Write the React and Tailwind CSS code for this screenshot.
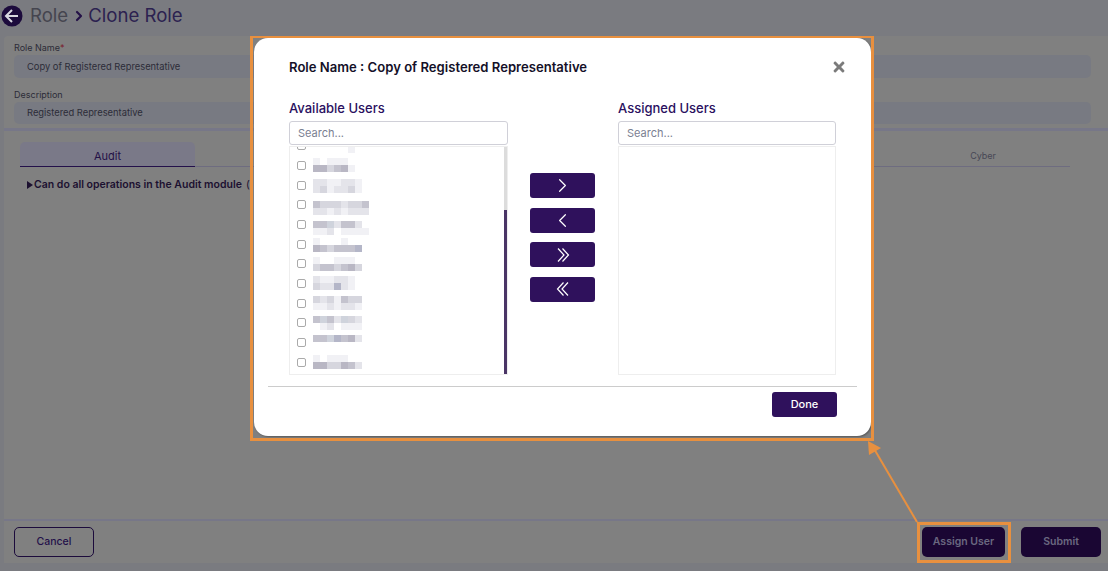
import React from "react";
import { ChevronRight, ChevronLeft } from "lucide-react";
import { FaTimes } from "react-icons/fa";

const A = "#c4c3ce", B = "#b9b7c4", C = "#d6d6de", D = "#e4e4ea", E = "#f1f1f5", W = "#ffffff", G = "#cfd3dc", H = "#b4b6c8";

const rows = [
  { y: 0, t: [A, C, D, G, C, A, C, G], b: [W, W, W, W, W, E, W, W] },
  { y: 0, t: [E, W, E, E, E, W, W, W], b: [B, B, C, A, B, E, W, W] },
  { y: 1, t: [D, D, E, E, D, D, E, W], b: [D, C, E, D, D, C, E, W] },
  { y: 3, t: [A, C, C, C, D, C, C, A], b: [D, D, E, D, E, D, D, D] },
  { y: 4, t: [A, A, G, D, A, A, D, W], b: [E, E, D, W, E, E, E, E] },
  { y: 1, t: [E, W, W, W, E, W, W, W], b: [B, A, C, A, A, A, H, W] },
  { y: 0, t: [E, W, W, E, E, E, W, W], b: [C, A, A, C, A, B, C, W] },
  { y: 0, t: [D, E, E, D, D, E, W, W], b: [C, D, D, H, D, E, W, W] },
  { y: 0, t: [C, D, C, E, A, C, C, W], b: [E, E, D, E, D, D, E, W] },
  { y: 0, t: [A, G, A, D, G, C, D, W], b: [W, E, D, W, E, E, E, W] },
  { y: 0, t: [A, A, G, H, A, B, D, W], b: [W, W, W, W, W, W, W, W] },
  { y: 0, t: [E, W, E, E, E, W, W, W], b: [B, B, C, C, B, A, D, W] },
];

function Cells({ list }) {
  return (
    <div className="flex">
      {list.map((c, i) => (
        <div key={i} className="w-[7px] h-[7px]" style={{ backgroundColor: c }} />
      ))}
    </div>
  );
}

function SearchBox() {
  return (
    <input
      readOnly
      placeholder="Search..."
      className="block w-full h-[24px] mt-[3px] border border-[#d0d0d8] rounded-[3px] px-2 text-[11px] text-[#555] placeholder:text-[#7b8092] outline-none bg-white"
    />
  );
}

function MoveButton({ children }) {
  return (
    <button className="w-[65px] h-[25px] bg-[#2f115c] rounded-[3px] flex items-center justify-center text-white">
      {children}
    </button>
  );
}

function Double({ left }) {
  return (
    <svg width="14" height="14" viewBox="0 0 14 14" fill="none" stroke="currentColor" strokeWidth="1.2">
      {left ? (
        <>
          <polyline points="7.5,0.5 1.5,7 7.5,13.5" />
          <polyline points="12,0.5 6,7 12,13.5" />
        </>
      ) : (
        <>
          <polyline points="2,0.5 8,7 2,13.5" />
          <polyline points="6.5,0.5 12.5,7 6.5,13.5" />
        </>
      )}
    </svg>
  );
}

export default function App() {
  return (
    <div className="relative w-[1108px] h-[571px] overflow-hidden bg-[#7a7b80] font-['Inter',sans-serif]">
      {/* Dimmed page */}
      <div className="h-[36px] flex items-center pl-[1px] pb-[6px]">
        <svg width="22" height="22" viewBox="0 0 22 22" className="mt-[2px]">
          <circle cx="11" cy="11" r="10.5" fill="#1c0b3c" />
          <polyline points="11,5 5,11 11,17" fill="none" stroke="#d8d8e0" strokeWidth="2" />
          <line x1="5.5" y1="11" x2="17" y2="11" stroke="#d8d8e0" strokeWidth="2" />
        </svg>
        <span className="ml-[7px] text-[18.6px] leading-[24px] text-[#45454f]">Role</span>
        <ChevronRight size={16} strokeWidth={3.2} className="text-[#241147] ml-[3px] mr-0 mt-[2px]" />
        <span className="ml-[1px] text-[18.6px] leading-[24px] text-[#2c2250]">Clone Role</span>
      </div>

      <div className="ml-[4px] h-[527px] bg-[#808080] rounded-tl-[4px] flex flex-col">
        <div className="px-[10px] pt-[6px] h-[95px] border-b-[3px] border-[#777788]">
          <div className="text-[9px] leading-[12px] text-[#2c2c38]">
            Role Name<span className="text-[#7a1a2a]">*</span>
          </div>
          <div className="mt-[1px] w-[1077px] h-[23px] bg-[#787a82] rounded-[5px] pl-[13px] pt-[2px] flex items-center text-[9.35px] text-[#2c2c38]">
            Copy of Registered Representative
          </div>
          <div className="mt-[11px] text-[9px] leading-[12px] text-[#2c2c38]">Description</div>
          <div className="mt-[1px] w-[1077px] h-[22px] bg-[#787a82] rounded-[5px] pl-[13px] pt-[1px] flex items-center text-[9.35px] text-[#2c2c38]">
            Registered Representative
          </div>
        </div>

        <div className="flex-1 pl-[16px] pt-[11px]">
          <div className="flex w-[1050px] border-b border-[#6e6c80]">
            <div className="w-[175px] h-[25px] bg-[#7a7988] rounded-t-[5px] border-b border-[#23104a] -mb-px flex items-end justify-center pb-[3px] text-[11px] leading-[14px] text-[#241147]">
              Audit
            </div>
            <div className="flex-1 flex justify-end pr-[74px] items-end pb-[4px] text-[9px] leading-[12px] text-[#474755]">Cyber</div>
          </div>
          <div className="mt-[10px] pl-[7px] flex items-center text-[10.5px] font-semibold text-[#1c1030]">
            <span className="w-0 h-0 border-y-[4px] border-y-transparent border-l-[6px] border-l-[#1c1030] mr-[1px]" />
            Can do all operations in the Audit module
            <span className="ml-[4px] font-normal">(i</span>
          </div>
        </div>

        <div className="h-[44px] border-t-[2px] border-[#777788] pl-[10px] pr-[7px] flex items-center justify-between">
          <button className="w-[80px] h-[30px] border border-[#1c0b3c] rounded-[5px] text-[10.5px] font-medium text-[#23104a]">
            Cancel
          </button>
          <div className="flex gap-[16px]">
            <button className="w-[83px] h-[30px] bg-[#1a0633] rounded-[5px] text-[10.5px] font-semibold text-[#6a6880]">
              Assign User
            </button>
            <button className="w-[80px] h-[30px] bg-[#1a0633] rounded-[5px] text-[10.5px] font-semibold text-[#6a6880]">
              Submit
            </button>
          </div>
        </div>
      </div>

      {/* Modal */}
      <div className="absolute left-[254px] top-[38px] w-[617px] h-[398px] bg-white rounded-[14px] shadow-[1px_1px_2px_rgba(0,0,0,0.3)] pl-[35px] pr-[35px] flex flex-col">
        <div className="pt-[20px] h-[60px] flex items-start justify-between">
          <span className="text-[13.1px] leading-[18px] font-semibold text-[#141028]">
            Role Name : Copy of Registered Representative
          </span>
          <FaTimes className="text-[#7b7b7b] text-[16px] mt-[1px] -mr-[11px]" />
        </div>
        <div className="flex">
          <div className="w-[219px]">
            <div className="text-[13px] leading-[20px] font-medium text-[#2a1060]">Available Users</div>
            <SearchBox />
            <div className="relative mt-px h-[229px] border border-[#eeeeee] overflow-hidden">
              <div className="-mt-[11px]">
                {rows.map((r, i) => (
                  <div key={i} className="h-[19.67px] flex items-center pl-[7px]">
                    <div className="w-[9px] h-[9px] border border-[#aaaaaa] rounded-[2px] bg-white shrink-0" />
                    <div className="ml-[7px]" style={{ marginTop: r.y * 2 }}>
                      <Cells list={r.t} />
                      <Cells list={r.b} />
                    </div>
                  </div>
                ))}
              </div>
              <div className="absolute right-0 top-0 bottom-0 w-[3px] bg-[#dcdcdc]">
                <div className="mt-[63px] h-[164px] bg-[#4a3566]" />
              </div>
            </div>
          </div>

          <div className="w-[110px] pt-[75px] pl-[22px] flex flex-col items-start gap-[9.67px]">
            <MoveButton><ChevronRight size={23} strokeWidth={1.25} /></MoveButton>
            <MoveButton><ChevronLeft size={23} strokeWidth={1.25} /></MoveButton>
            <MoveButton><Double /></MoveButton>
            <MoveButton><Double left /></MoveButton>
          </div>

          <div className="w-[218px]">
            <div className="text-[13px] leading-[20px] font-medium text-[#2a1060]">Assigned Users</div>
            <SearchBox />
            <div className="mt-px h-[229px] border border-[#eeeeee]" />
          </div>
        </div>
        <div className="mt-[11px] -ml-[21px] -mr-[21px] border-t border-[#cccccc] pt-[5px] pr-[20px] flex justify-end">
          <button className="w-[65px] h-[25px] bg-[#2f115c] rounded-[3px] text-[11px] font-medium text-white">
            Done
          </button>
        </div>
      </div>

      {/* Annotation overlay */}
      <div className="absolute left-[250px] top-[36px] w-[624px] h-[405px] border-x-[3px] border-b-[3px] border-t-[2px] border-[#e8903f] pointer-events-none" />
      <div className="absolute left-[917px] top-[522px] w-[94px] h-[41px] border-[3px] border-[#e8903f] pointer-events-none" />
      <svg className="absolute left-0 top-0 pointer-events-none" width="1108" height="571">
        <line x1="917" y1="522" x2="873" y2="447" stroke="#e8903f" strokeWidth="2" />
        <polygon points="868,441 881,448 869,455" fill="#e8903f" />
      </svg>
    </div>
  );
}
